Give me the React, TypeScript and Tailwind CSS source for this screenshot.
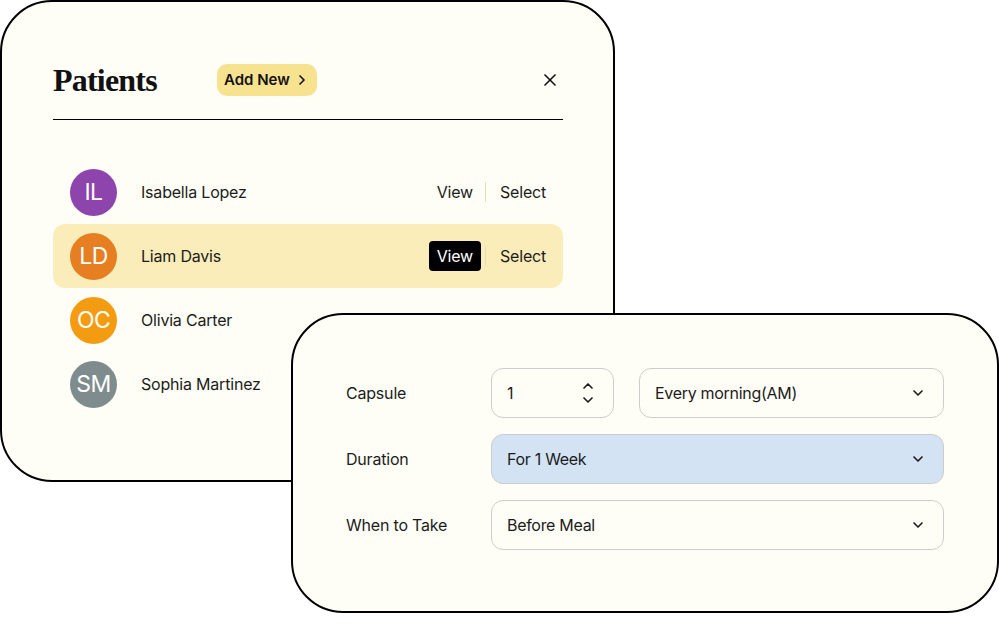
import { X, ChevronRight, ChevronDown, ChevronUp } from "lucide-react";

const patients = [
  { initials: "IL", name: "Isabella Lopez", color: "bg-[#8e44ad]", actions: true },
  { initials: "LD", name: "Liam Davis", color: "bg-[#e67e22]", actions: true, active: true },
  { initials: "OC", name: "Olivia Carter", color: "bg-[#f39c12]" },
  { initials: "SM", name: "Sophia Martinez", color: "bg-[#7f8c8d]" },
];

const font = { fontFamily: "Inter, 'Noto Sans', sans-serif" };

const PatientRow = ({ p }: { p: (typeof patients)[number] }) => (
  <div className={`flex items-center h-16 px-[17px] rounded-[12px] ${p.active ? "bg-[#faedb9]" : ""}`}>
    <div className={`w-[47px] h-[47px] rounded-full ${p.color} flex items-center justify-center text-white text-[23px] tracking-tight`}>
      {p.initials}
    </div>
    <span className="ml-6 text-[16px] tracking-[-0.2px] text-[#1c1c1c]">{p.name}</span>
    {p.actions && (
      <div className="ml-auto flex items-center text-[16px] tracking-[-0.2px]">
        <span className={`h-[30px] px-2 flex items-center rounded-[4px] ${p.active ? "bg-black text-white" : "text-[#1c1c1c]"}`}>View</span>
        <span className="ml-1 w-px h-5 bg-[#e4ddc0]" />
        <span className="ml-[14px] text-[#1c1c1c]">Select</span>
      </div>
    )}
  </div>
);

const Field = ({ children, className = "" }: { children: React.ReactNode; className?: string }) => (
  <div className={`h-[50px] rounded-[12px] border border-[#cdcdcd] flex items-center pl-[15px] pr-[17px] text-[16px] tracking-[-0.3px] text-[#1c1c1c] ${className}`}>
    {children}
  </div>
);

export default function App() {
  return (
    <div className="relative w-[999px] h-[641px] bg-white overflow-hidden" style={font}>
      {/* Patients card */}
      <div className="absolute left-0 top-0 w-[615px] h-[482px] rounded-[52px] border-[2.5px] border-black bg-[#fefef6] pl-[51px] pr-[50px] pt-[60px]">
        <div className="flex items-center h-9">
          <h1 className="w-[164px] text-[32px] font-semibold tracking-[-0.8px] text-[#111]" style={{ fontFamily: "'Liberation Serif', serif" }}>
            Patients
          </h1>
          <button className="h-8 px-[7px] rounded-[10px] bg-[#f6e28f] flex items-center gap-1 text-[15px] font-semibold text-[#111]">
            Add New
            <ChevronRight size={16} strokeWidth={2.5} />
          </button>
          <X size={20} strokeWidth={2} className="ml-auto mr-[3px] text-[#111]" />
        </div>
        <div className="mt-[21px] h-px bg-black" />
        <div className="mt-10 flex flex-col">
          {patients.map((p) => (
            <PatientRow key={p.initials} p={p} />
          ))}
        </div>
      </div>

      {/* Prescription card */}
      <div className="absolute left-[291px] top-[313px] w-[708px] h-[300px] rounded-[52px] border-[2.5px] border-black bg-[#fefef6] pl-[53px] pr-[53px] pt-[52.5px]">
        <div className="flex flex-col gap-4">
          <div className="flex items-center">
            <span className="w-[145px] text-[16px] tracking-[-0.2px] text-[#1c1c1c]">Capsule</span>
            <Field className="w-[123px] justify-between pr-[13px]">
              <span>1</span>
              <span className="flex flex-col items-center -space-y-[2px]">
                <ChevronUp size={16} strokeWidth={2.5} />
                <ChevronDown size={16} strokeWidth={2.5} />
              </span>
            </Field>
            <Field className="ml-[25px] flex-1 justify-between">
              <span>Every morning(AM)</span>
              <ChevronDown size={16} strokeWidth={2.5} />
            </Field>
          </div>
          <div className="flex items-center">
            <span className="w-[145px] text-[16px] tracking-[-0.2px] text-[#1c1c1c]">Duration</span>
            <Field className="flex-1 justify-between bg-[#d3e3f3] border-[#b9c3cc]">
              <span>For 1 Week</span>
              <ChevronDown size={16} strokeWidth={2.5} />
            </Field>
          </div>
          <div className="flex items-center">
            <span className="w-[145px] text-[16px] tracking-[-0.2px] text-[#1c1c1c]">When to Take</span>
            <Field className="flex-1 justify-between">
              <span>Before Meal</span>
              <ChevronDown size={16} strokeWidth={2.5} />
            </Field>
          </div>
        </div>
      </div>
    </div>
  );
}
